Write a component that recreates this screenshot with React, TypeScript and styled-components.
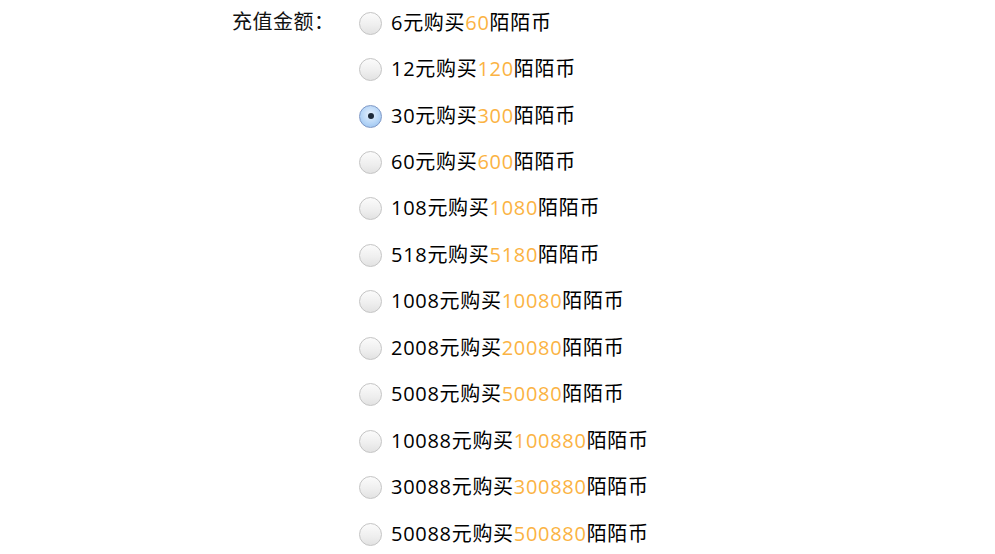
import { useState } from 'react';
import styled, { createGlobalStyle } from 'styled-components';

const GlobalStyle = createGlobalStyle`
  html, body {
    margin: 0;
    padding: 0;
    background: #fff;
  }
  body {
    font-family: "Open Sans", "Noto Sans CJK SC", sans-serif;
    color: #000;
  }
`;

interface Option {
  price: number;
  coins: number;
}

const options: Option[] = [
  { price: 6, coins: 60 },
  { price: 12, coins: 120 },
  { price: 30, coins: 300 },
  { price: 60, coins: 600 },
  { price: 108, coins: 1080 },
  { price: 518, coins: 5180 },
  { price: 1008, coins: 10080 },
  { price: 2008, coins: 20080 },
  { price: 5008, coins: 50080 },
  { price: 10088, coins: 100880 },
  { price: 30088, coins: 300880 },
  { price: 50088, coins: 500880 },
];

const App = () => {
  const [selected, setSelected] = useState(30);

  return (
    <>
      <GlobalStyle />
      <Form>
        <Label>充值金额：</Label>
        <OptionList>
          {options.map((o) => (
            <OptionRow key={o.price} onClick={() => setSelected(o.price)}>
              <Radio $checked={selected === o.price} />
              <OptionText>
                {o.price}元购买<Coins>{o.coins}</Coins>陌陌币
              </OptionText>
            </OptionRow>
          ))}
        </OptionList>
      </Form>
    </>
  );
};

const Form = styled.div`
  display: flex;
  padding-left: 232px;
`;

const Label = styled.div`
  width: 127px;
  height: 46px;
  line-height: 44px;
  font-size: 20px;
  letter-spacing: 0.5px;
  color: #111;
  flex-shrink: 0;
`;

const OptionList = styled.div`
  display: flex;
  flex-direction: column;
`;

const OptionRow = styled.label`
  display: flex;
  align-items: center;
  height: 46.45px;
  cursor: pointer;
`;

const Radio = styled.span<{ $checked: boolean }>`
  position: relative;
  width: 21px;
  height: 21px;
  border-radius: 50%;
  border: 1px solid ${(p) => (p.$checked ? '#7e98c6' : '#c4c4c4')};
  background: ${(p) =>
    p.$checked
      ? 'radial-gradient(circle at 50% 40%, #e6f1fd 0%, #b7d6f7 55%, #8fbcec 100%)'
      : 'linear-gradient(to bottom, #fbfbfb 0%, #eeeeee 60%, #e2e2e2 100%)'};
  flex-shrink: 0;
  margin-right: 9px;
  &::after {
    content: '';
    display: ${(p) => (p.$checked ? 'block' : 'none')};
    position: absolute;
    left: 50%;
    top: 50%;
    width: 6px;
    height: 6px;
    margin: -3px 0 0 -3px;
    border-radius: 50%;
    background: #1d2a3a;
  }
`;

const OptionText = styled.span`
  font-size: 20px;
  line-height: 28px;
  margin-top: -1px;
  letter-spacing: 0.7px;
  color: #000;
  white-space: nowrap;
`;

const Coins = styled.span`
  color: #fbb343;
`;

export default App;
